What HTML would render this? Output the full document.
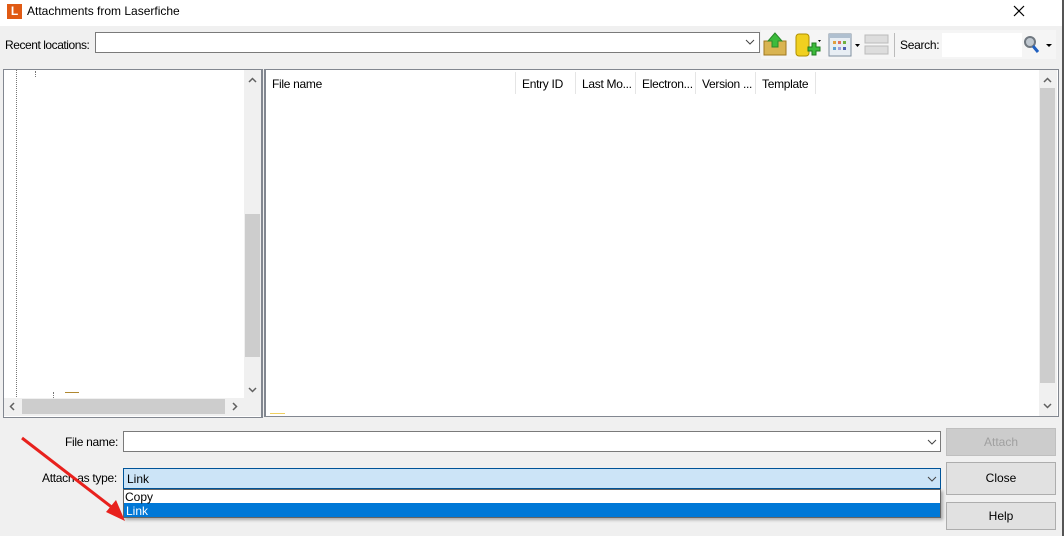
<!DOCTYPE html>
<html><head><meta charset="utf-8"><style>
*{box-sizing:border-box;margin:0;padding:0}
body{width:1064px;height:536px;background:#f0f0f0;position:relative;overflow:hidden;font-family:"Liberation Sans",sans-serif;font-size:12px;color:#000}
.a{position:absolute}
.t{letter-spacing:-0.3px}
.sb{background:#f0f0f0}
.thumb{background:#cdcdcd}
.btn{position:absolute;border:1px solid #adadad;background:#e1e1e1;text-align:center}
</style></head><body>
<div class="a" style="left:0;top:0;width:1064px;height:26px;background:#fff"></div>
<div class="a" style="left:7px;top:4px;width:15px;height:15px;background:#e05a14;color:#fff;font-weight:bold;font-size:12px;text-align:center;line-height:15px">L</div>
<div class="a" style="left:27px;top:4px;font-size:12px">Attachments from Laserfiche</div>
<svg class="a" style="left:1013px;top:5px" width="12" height="12"><path d="M1 1L11 11M11 1L1 11" stroke="#000" stroke-width="1.2"/></svg>
<div class="a" style="left:1062px;top:0;width:2px;height:536px;background:#555"></div>

<div class="a t" style="left:5px;top:38px;letter-spacing:-0.45px">Recent locations:</div>
<div class="a" style="left:95px;top:32px;width:665px;height:21px;background:#fff;border:1px solid #7a7a7a"></div>
<svg class="a" style="left:745px;top:39px" width="10" height="6"><path d="M1 1L5 5L9 1" stroke="#444" fill="none"/></svg>
<div class="a" style="left:761px;top:30px;width:295px;height:29px;background:#f5f5f5"></div>
<svg class="a" style="left:762px;top:32px" width="26" height="26"><rect x="2" y="9" width="22" height="14" fill="#d9b452" stroke="#a07820"/><path d="M13 1L6 9H10V15H16V9H20Z" fill="#3cbb3c" stroke="#2a8a2a"/></svg>
<svg class="a" style="left:794px;top:32px" width="30" height="26"><rect x="2" y="2" width="13" height="22" rx="3" fill="#f0d020" stroke="#b09000"/><path d="M14 15h4v-4h4v4h4v4h-4v4h-4v-4h-4z" fill="#3cbb3c" stroke="#1f7a1f"/><path d="M24 8l3 0l-1.5 2z" fill="#000"/></svg>
<svg class="a" style="left:828px;top:32px" width="34" height="26"><rect x="1" y="2" width="22" height="22" fill="#e8eef4" stroke="#8090a0"/><rect x="1" y="2" width="22" height="4" fill="#b0c0d0"/><rect x="5" y="9" width="3" height="3" fill="#e0a040"/><rect x="10" y="9" width="3" height="3" fill="#e07060"/><rect x="15" y="9" width="3" height="3" fill="#70b040"/><rect x="5" y="15" width="3" height="3" fill="#60a0d0"/><rect x="10" y="15" width="3" height="3" fill="#a0a0e0"/><rect x="15" y="15" width="3" height="3" fill="#5060b0"/><path d="M27 12l5 0l-2.5 3z" fill="#000"/></svg>
<svg class="a" style="left:864px;top:33px" width="26" height="24"><rect x="1" y="2" width="23" height="8" fill="#ddd" stroke="#bbb"/><rect x="1" y="13" width="23" height="8" fill="#ddd" stroke="#bbb"/></svg>
<div class="a" style="left:894px;top:33px;width:1px;height:24px;background:#bbb"></div>
<div class="a t" style="left:900px;top:38px">Search:</div>
<div class="a" style="left:942px;top:33px;width:80px;height:24px;background:#fff"></div>
<svg class="a" style="left:1022px;top:34px" width="36" height="22"><circle cx="8" cy="8" r="5" fill="#c0c8d0" stroke="#707880" stroke-width="2"/><path d="M11 12L16 18" stroke="#2060c0" stroke-width="3"/><path d="M24 10l6 0l-3 3z" fill="#000"/></svg>

<div class="a" style="left:3px;top:69px;width:260px;height:349px;background:#fff;border:1px solid #828790;border-right:2px solid #828790"></div>
<div class="a" style="left:16px;top:70px;width:0;height:327px;border-left:1px dotted #777"></div>
<div class="a" style="left:35px;top:71px;width:0;height:6px;border-left:1px dotted #777"></div>
<div class="a" style="left:53px;top:392px;width:0;height:6px;border-left:1px dotted #777"></div>
<div class="a" style="left:65px;top:392px;width:14px;height:1px;background:#b08830"></div>
<div class="a sb" style="left:244px;top:70px;width:17px;height:328px"></div>
<div class="a thumb" style="left:245px;top:214px;width:15px;height:143px"></div>
<svg class="a" style="left:248px;top:77px" width="9" height="6"><path d="M1 5L4.5 1.5L8 5" stroke="#606060" stroke-width="1.5" fill="none"/></svg>
<svg class="a" style="left:248px;top:387px" width="9" height="6"><path d="M1 1L4.5 4.5L8 1" stroke="#606060" stroke-width="1.5" fill="none"/></svg>
<div class="a sb" style="left:4px;top:398px;width:257px;height:18px"></div>
<div class="a thumb" style="left:22px;top:399px;width:203px;height:15px"></div>
<svg class="a" style="left:9px;top:402px" width="6" height="9"><path d="M5 1L1.5 4.5L5 8" stroke="#606060" stroke-width="1.5" fill="none"/></svg>
<svg class="a" style="left:232px;top:402px" width="6" height="9"><path d="M1 1L4.5 4.5L1 8" stroke="#606060" stroke-width="1.5" fill="none"/></svg>

<div class="a" style="left:264px;top:69px;width:795px;height:348px;background:#fff;border:1px solid #828790;border-left:2px solid #828790"></div>
<div class="a t" style="left:272px;top:77px">File name</div>
<div class="a" style="left:515px;top:72px;width:1px;height:22px;background:#e5e5e5"></div>
<div class="a t" style="left:522px;top:77px">Entry ID</div>
<div class="a" style="left:575px;top:72px;width:1px;height:22px;background:#e5e5e5"></div>
<div class="a t" style="left:582px;top:77px">Last Mo...</div>
<div class="a" style="left:635px;top:72px;width:1px;height:22px;background:#e5e5e5"></div>
<div class="a t" style="left:642px;top:77px">Electron...</div>
<div class="a" style="left:695px;top:72px;width:1px;height:22px;background:#e5e5e5"></div>
<div class="a t" style="left:702px;top:77px">Version ...</div>
<div class="a" style="left:755px;top:72px;width:1px;height:22px;background:#e5e5e5"></div>
<div class="a t" style="left:762px;top:77px">Template</div>
<div class="a" style="left:815px;top:72px;width:1px;height:22px;background:#e5e5e5"></div>
<div class="a" style="left:270px;top:413px;width:15px;height:1px;background:#f0d060"></div>
<div class="a sb" style="left:1039px;top:70px;width:18px;height:346px"></div>
<div class="a thumb" style="left:1040px;top:88px;width:15px;height:295px"></div>
<svg class="a" style="left:1043px;top:77px" width="9" height="6"><path d="M1 5L4.5 1.5L8 5" stroke="#606060" stroke-width="1.5" fill="none"/></svg>
<svg class="a" style="left:1043px;top:403px" width="9" height="6"><path d="M1 1L4.5 4.5L8 1" stroke="#606060" stroke-width="1.5" fill="none"/></svg>

<div class="a t" style="left:65px;top:435px">File name:</div>
<div class="a" style="left:123px;top:431px;width:818px;height:21px;background:#fff;border:1px solid #7a7a7a"></div>
<svg class="a" style="left:927px;top:439px" width="10" height="6"><path d="M1 1L5 5L9 1" stroke="#444" fill="none"/></svg>
<div class="btn" style="left:946px;top:428px;width:110px;height:28px;background:#cccccc;border-color:#bfbfbf;color:#a0a0a0;line-height:26px">Attach</div>
<div class="a t" style="left:42px;top:471px">Attach as type:</div>
<div class="a" style="left:123px;top:468px;width:818px;height:21px;background:#cce4f7;border:1px solid #005499"></div>
<div class="a" style="left:127px;top:472px">Link</div>
<svg class="a" style="left:927px;top:476px" width="10" height="6"><path d="M1 1L5 5L9 1" stroke="#444" fill="none"/></svg>
<div class="a" style="left:123px;top:489px;width:818px;height:29px;background:#fff;border:1px solid #646464;box-shadow:2px 2px 3px rgba(0,0,0,.3)"></div>
<div class="a" style="left:124px;top:503px;width:816px;height:14px;background:#0078d7"></div>
<div class="a" style="left:125px;top:490px">Copy</div>
<div class="a" style="left:126px;top:504px;color:#fff">Link</div>
<div class="btn" style="left:946px;top:462px;width:110px;height:33px;line-height:31px">Close</div>
<div class="btn" style="left:946px;top:502px;width:110px;height:28px;line-height:26px">Help</div>

<svg class="a" style="left:0;top:0" width="1064" height="536"><path d="M22 438L118 512" stroke="#e8211d" stroke-width="3"/><path d="M125 521L106 512L116 500Z" fill="#e8211d"/></svg>
</body></html>
